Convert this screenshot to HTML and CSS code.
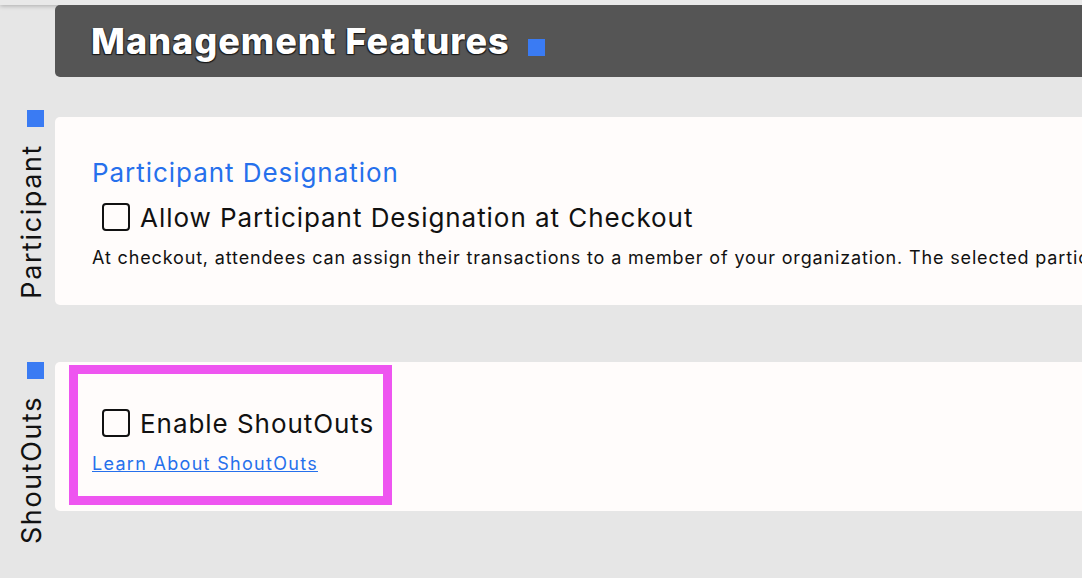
FILE: index.html
```html
<!DOCTYPE html>
<html>
<head>
    <title>Management Features</title>
    <meta charset="UTF-8">
    <meta name="viewport" content="width=device-width, initial-scale=1.0">
    <link rel="stylesheet" href="styles.css">
</head>
<body>
    <div class="topbar"></div>
    <div class="header">
        <h1>Management Features</h1>
        <span class="marker"></span>
    </div>

    <div class="section section-participant">
        <div class="side">
            <span class="marker"></span>
            <span class="side-label">Participant</span>
        </div>
        <div class="card card-participant">
            <h2>Participant Designation</h2>
            <label class="check-row">
                <span class="checkbox"></span>
                Allow Participant Designation at Checkout
            </label>
            <p class="desc">At checkout, attendees can assign their transactions to a member of your organization. The selected participant will receive credit for the sale.</p>
        </div>
    </div>

    <div class="section section-shoutouts">
        <div class="side">
            <span class="marker"></span>
            <span class="side-label">ShoutOuts</span>
        </div>
        <div class="card card-shoutouts">
            <div class="highlight">
                <label class="check-row">
                    <span class="checkbox"></span>
                    Enable ShoutOuts
                </label>
                <a href="#" class="learn">Learn About ShoutOuts</a>
            </div>
        </div>
    </div>
</body>
</html>
```

FILE: styles.css
```css
body {
    margin: 0;
    background-color: #e6e6e6;
    font-family: Inter, "Noto Sans", sans-serif;
    color: #111;
    overflow: hidden;
}
.topbar {
    height: 5px;
    background-color: #e9e9e9;
    box-shadow: 0 1px 4px rgba(0, 0, 0, 0.25);
}
.header {
    margin-left: 55px;
    height: 72px;
    background-color: #555555;
    border-radius: 5px 0 0 5px;
    display: flex;
    align-items: center;
    padding-left: 36px;
}
.header h1 {
    margin: 0;
    color: white;
    font-size: 36px;
    font-weight: 800;
    letter-spacing: 1px;
    text-shadow: 1px 1px 1px #1a1a1a, -1px 1px 1px #1a1a1a;
}
.marker {
    display: block;
    width: 17px;
    height: 17px;
    background-color: #3a7bf3;
    flex-shrink: 0;
}
.header .marker {
    margin-left: 18px;
    margin-top: 12px;
}
.section {
    display: flex;
    align-items: flex-start;
}
.section-participant {
    margin-top: 33px;
}
.section-shoutouts {
    margin-top: 57px;
}
.side {
    width: 55px;
    flex-shrink: 0;
    display: flex;
    flex-direction: column;
}
.side .marker {
    margin-left: 27px;
}
.side-label {
    writing-mode: vertical-rl;
    transform: rotate(180deg);
    font-size: 27px;
    line-height: 26px;
    letter-spacing: 1.6px;
    margin-top: 17px;
    margin-left: 19px;
    color: #111;
}
.card {
    flex: 1;
    min-width: 0;
    overflow: hidden;
    background-color: #fffcfb;
    border-radius: 5px 0 0 5px;
}
.card-participant {
    margin-top: 7px;
    padding: 40px 0 34px 37px;
}
.card-shoutouts {
    padding: 3px 0 6px 14px;
}
h2 {
    margin: 0;
    font-size: 26px;
    line-height: 32px;
    font-weight: 400;
    letter-spacing: 0.95px;
    color: #2670ec;
}
.check-row {
    display: flex;
    align-items: center;
    height: 36px;
    font-size: 26px;
    letter-spacing: 0.95px;
    white-space: nowrap;
}
.card-participant .check-row {
    margin-top: 10px;
}
.checkbox {
    width: 24px;
    height: 24px;
    border: 2.5px solid #111;
    border-radius: 4px;
    margin-left: 10px;
    margin-right: 10px;
    flex-shrink: 0;
}
.desc {
    margin: 10px 0 0;
    font-size: 18px;
    line-height: 26px;
    letter-spacing: 0.85px;
    white-space: nowrap;
}
.highlight {
    display: inline-block;
    border: 9px solid #ee55f0;
    padding: 31px 9px 19px 14px;
}
.learn {
    display: block;
    margin-top: 10px;
    font-size: 18px;
    line-height: 26px;
    letter-spacing: 1.3px;
    color: #2670ec;
}
```
